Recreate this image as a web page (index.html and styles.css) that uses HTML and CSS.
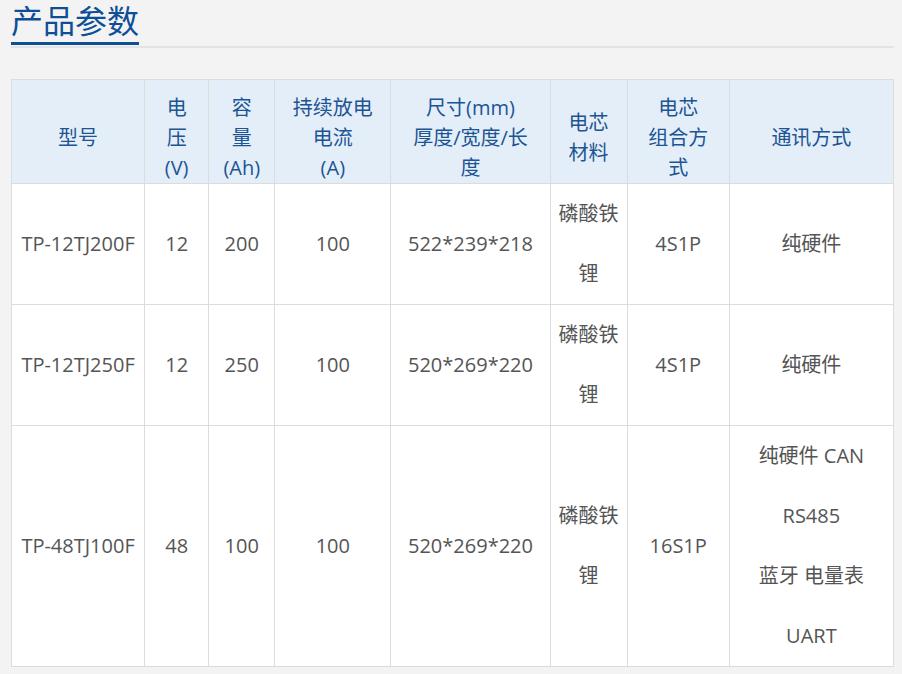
FILE: index.html
```html
<!DOCTYPE html>
<html lang="zh">
<head>
<meta charset="utf-8">
<title>产品参数</title>
<link rel="stylesheet" href="styles.css">
</head>
<body>
<div class="page">
  <div class="title-bar"><h2 class="title">产品参数</h2></div>
  <table class="params">
    <colgroup>
      <col class="c1"><col class="c2"><col class="c3"><col class="c4"><col class="c5"><col class="c6"><col class="c7"><col class="c8">
    </colgroup>
    <thead>
      <tr>
        <th>型号</th>
        <th>电<br>压<br>(V)</th>
        <th>容<br>量<br>(Ah)</th>
        <th>持续放电<br>电流<br>(A)</th>
        <th>尺寸(mm)<br>厚度/宽度/长<br>度</th>
        <th>电芯<br>材料</th>
        <th>电芯<br>组合方<br>式</th>
        <th>通讯方式</th>
      </tr>
    </thead>
    <tbody>
      <tr>
        <td>TP-12TJ200F</td><td>12</td><td>200</td><td>100</td><td>522*239*218</td><td>磷酸铁<br>锂</td><td>4S1P</td><td>纯硬件</td>
      </tr>
      <tr>
        <td>TP-12TJ250F</td><td>12</td><td>250</td><td>100</td><td>520*269*220</td><td>磷酸铁<br>锂</td><td>4S1P</td><td>纯硬件</td>
      </tr>
      <tr>
        <td>TP-48TJ100F</td><td>48</td><td>100</td><td>100</td><td>520*269*220</td><td>磷酸铁<br>锂</td><td>16S1P</td><td>纯硬件 CAN<br>RS485<br>蓝牙 电量表<br>UART</td>
      </tr>
    </tbody>
  </table>
</div>
</body>
</html>
```

FILE: styles.css
```css
html, body {
  margin: 0;
  padding: 0;
  background: #f3f3f3;
}
body {
  font-family: "Open Sans", "Noto Sans CJK SC", sans-serif;
}
.page {
  padding: 0 8px 0 11px;
}
.title-bar {
  border-bottom: 2px solid #e3e3e3;
  height: 46px;
}
.title {
  display: block;
  width: fit-content;
  margin: 0;
  line-height: 38px;
  padding-bottom: 4px;
  font-size: 32px;
  font-weight: normal;
  color: #0d4f96;
  font-family: "Noto Sans CJK SC", sans-serif;
  border-bottom: 3px solid #0b4f95;
}
.params {
  margin-top: 31px;
  width: 883px;
  border-collapse: collapse;
  table-layout: fixed;
  background: #fff;
  border: 1px solid #dcdcdc;
}
.c1 { width: 133px; }
.c2 { width: 64px; }
.c3 { width: 66px; }
.c4 { width: 116px; }
.c5 { width: 159px; }
.c6 { width: 77px; }
.c7 { width: 102px; }
.c8 { width: 164px; }
.params th, .params td {
  border: 1px solid #dcdcdc;
  text-align: center;
  vertical-align: middle;
  font-size: 20px;
}
.params th {
  background: #e3eef8;
  color: #1c5494;
  font-weight: normal;
  line-height: 30px;
  padding: 13px 0 0;
  height: 89px;
}
.params td {
  color: #555;
  line-height: 60px;
  padding: 0;
  height: 120px;
}
```
